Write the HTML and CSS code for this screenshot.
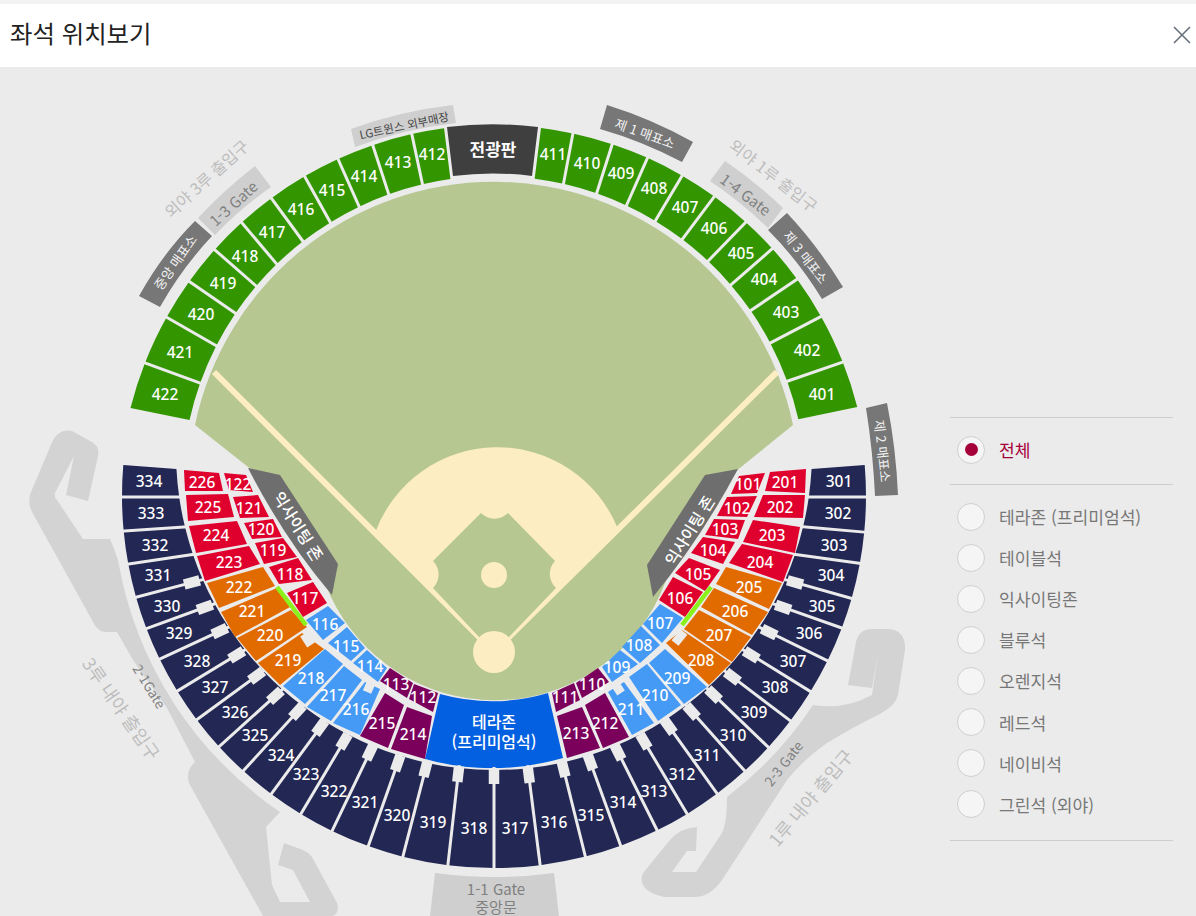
FILE: index.html
```html
<!DOCTYPE html>
<html lang="ko">
<head>
<meta charset="utf-8">
<title>좌석 위치보기</title>
<link rel="stylesheet" href="styles.css">
</head>
<body>
<header class="top">
  <h1 class="title">좌석 위치보기</h1>
  <button class="close" aria-label="닫기">
    <svg width="18" height="18" viewBox="0 0 18 18"><path d="M1 1L17 17M17 1L1 17" class="close-x"/></svg>
  </button>
</header>
<main class="stage">
  <svg class="map" id="map" width="940" height="849" viewBox="0 67 940 849">
    <!-- gate walkways -->
    <path class="walk" d="M88 501L66 495L74 456L55 493Q54 497 57 500L83 539L110 539Q114 548 118 560A383 383 0 0 0 280 812L266 827L272 885L280 902L310 902L293 870L278 865L284 843L303 850Q308 852 312 857L337 903Q340 912 333 916L263 916L190 785Q184 772 195 762L167 708L133 660L117 632L104 632Q96 630 92 620L32 512Q27 502 31 492L53 440Q60 428 72 431L92 442Q100 447 98 456Z"/>
    <path class="walk" d="M878 653L872 688L848 685L856 642Q859 629 872 629L888 629Q906 630 905 650L898 695Q896 705 880 714Q855 726 827 743Q805 758 787 780L722 880Q710 897 695 897L664 897Q636 890 643 873L670 840Q680 828 697 827L696 851L687 851L672 872L696 872L722 833Q727 822 727 797A381 381 0 0 0 813 705Q845 710 872 695Z"/>
    <!-- field -->
    <path class="grass" d="M195 425A305.4 305.4 0 0 1 793 425L700 500L660 595A182 182 0 0 1 330 595L290 500Z"/>
    <path class="clay" d="M375 533A130 130 0 0 1 618 529L494 652Z"/>
    <path class="foul" d="M214 372L494 652L777 372"/>
    <path class="grass" d="M481 513A19 19 0 0 0 508 513L555 561A19 19 0 0 0 556 588L509 637L479 637L433 588A19 19 0 0 0 433 561Z"/>
    <circle class="clay" cx="494" cy="575" r="13"/>
    <circle class="clay" cx="494" cy="652" r="21"/>
    <!-- exciting zones -->
    <path class="zone" d="M248 468L280 475L338 564L332 595Q285 540 248 468Z"/>
    <path class="zone" d="M738 469L705 475L647 565L653 597Q700 540 738 469Z"/>
    <text class="zone-t" transform="translate(299 526) rotate(58)">익사이팅 존</text>
    <text class="zone-t" transform="translate(689 530) rotate(-58)">익사이팅 존</text>
    <!-- signs -->
    <path class="sign-l" d="M351 129Q400 111 453 105L456 123Q404 129 355 147Z"/>
    <text class="t-dark" transform="translate(404 125) rotate(-12)">LG트윈스 외부매장</text>
    <path class="sign-l" d="M255 166L271 187Q241 208 215 235L198 218Q224 190 255 166Z"/>
    <text class="t-gate" transform="translate(233 203) rotate(-42)">1-3 Gate</text>
    <path class="sign-d" d="M195 221L212 236Q182 268 160 307L139 296Q163 253 195 221Z"/>
    <text class="t-sign" transform="translate(175 262) rotate(-55)">중앙 매표소</text>
    <text class="t-out" transform="translate(206 178) rotate(-42)">외야 3루 출입구</text>
    <path class="sign-d" d="M607 105Q652 119 693 142L682 162Q642 141 600 129Z"/>
    <text class="t-sign" transform="translate(645 133) rotate(20)">제 1 매표소</text>
    <path class="sign-l" d="M725 161Q756 182 783 208L768 228Q741 202 710 181Z"/>
    <text class="t-gate" transform="translate(746 194) rotate(37)">1-4 Gate</text>
    <path class="sign-d" d="M787 213Q818 246 843 287L822 299Q798 260 768 230Z"/>
    <text class="t-sign" transform="translate(806 257) rotate(52)">제 3 매표소</text>
    <text class="t-out" transform="translate(774 175) rotate(38)">외야 1루 출입구</text>
    <path class="sign-d" d="M887 403Q896 448 898 495L875 496Q873 452 866 408Z"/>
    <text class="t-sign" transform="translate(883 451) rotate(84)">제 2 매표소</text>
    <path class="sign-l" d="M435 873Q495 881 554 873L559 916L430 916Z"/>
    <text class="t-gate" x="496" y="888">1-1 Gate<tspan x="496" dy="18">중앙문</tspan></text>
    <text class="t-out big" transform="translate(122 708) rotate(55)">3루 내야 출입구</text>
    <text class="t-gate small" transform="translate(150 686) rotate(58)">2-1Gate</text>
    <text class="t-gate small" transform="translate(783 763) rotate(-52)">2-3 Gate</text>
    <text class="t-out big" transform="translate(810 797) rotate(-50)">1루 내야 출입구</text>
    <!-- fixed seating blocks -->
    <path class="board" d="M447 127A375 375 0 0 1 538 127L532 176A312 312 0 0 0 453 176Z"/>
    <text class="board-t" x="493" y="148">전광판</text>
    <path class="terra" d="M440 694Q494 709 548 693L563 758Q494 778 425 759Z"/>
    <text class="terra-t" x="494" y="721">테라존<tspan x="494" dy="20">(프리미엄석)</tspan></text>
    <g id="seats"></g>
    <path class="lime" d="M277 587L306 625"/>
    <path class="lime" d="M711 587L682 625"/>
  </svg>
  <aside class="legend">
    <div class="legend-group first">
      <label class="row on"><span class="radio"></span>전체</label>
    </div>
    <div class="legend-group">
      <label class="row"><span class="radio"></span>테라존 (프리미엄석)</label>
      <label class="row"><span class="radio"></span>테이블석</label>
      <label class="row"><span class="radio"></span>익사이팅존</label>
      <label class="row"><span class="radio"></span>블루석</label>
      <label class="row"><span class="radio"></span>오렌지석</label>
      <label class="row"><span class="radio"></span>레드석</label>
      <label class="row"><span class="radio"></span>네이비석</label>
      <label class="row"><span class="radio"></span>그린석 (외야)</label>
    </div>
  </aside>
</main>
<script src="seats.js"></script>
</body>
</html>
```
FILE: styles.css
```css
* { box-sizing: border-box; }
html, body { margin: 0; padding: 0; height: 100%; overflow: hidden; }
body {
  background: #ebebeb;
  font-family: "Noto Sans CJK KR", "Noto Sans", sans-serif;
  width: 1196px;
  height: 916px;
}
.top {
  height: 67px;
  border-top: 4px solid #f2f2f2;
  background: #fff;
  display: flex;
  align-items: center;
  justify-content: space-between;
  padding: 0 5px 0 10px;
}
.title { margin: 0; font-size: 24.4px; font-weight: 400; color: #222; line-height: 1; position: relative; top: -2px; }
.close { border: 0; background: none; padding: 0; width: 18px; height: 18px; position: relative; top: -1px; }
.close svg { display: block; }
.close-x { stroke: #66707a; stroke-width: 1.6; fill: none; }
.stage { display: flex; height: 849px; }
.map { display: block; flex: none; }
.legend { margin-left: 10px; padding-top: 350px; width: 223px; }
.legend-group { border-top: 1px solid #cdcdcd; padding: 11px 0 15px 7px; display: grid; grid-auto-rows: 41.1px; }
.legend-group.first { padding-bottom: 14px; }
.legend-group:last-child { border-bottom: 1px solid #cdcdcd; }
.row { display: flex; align-items: center; gap: 14px; font-size: 17.1px; color: #777; line-height: 1; }
.row.on { color: #a6003a; }
.radio { width: 28px; height: 28px; border-radius: 50%; border: 1px solid #cfcfcf; background: #f5f5f5; flex: none; display: flex; align-items: center; justify-content: center; }
.row.on .radio::after { content: ""; width: 13px; height: 13px; border-radius: 50%; background: #a6003a; }

.walk { fill: #d3d3d3; }
.grass { fill: #b6c791; }
.clay { fill: #fdedc2; }
.foul { fill: none; stroke: #fdedc2; stroke-width: 6; }
.zone { fill: #6e6e6e; }
.sign-l { fill: #cfcfcf; }
.sign-d { fill: #777; }
.board { fill: #3f3f3f; }
.terra { fill: #0360e0; }
.lime { stroke: #8af21a; stroke-width: 4.5; fill: none; }
text { text-anchor: middle; dominant-baseline: central; font-family: "Noto Sans CJK KR", "Noto Sans", sans-serif; }
.zone-t { fill: #fff; font-size: 16px; font-weight: 500; }
.t-dark { fill: #444; font-size: 11.5px; }
.t-gate { fill: #808080; font-size: 15px; }
.t-gate.small { font-size: 13.5px; }
.t-sign { fill: #f2f2f2; font-size: 13px; }
.t-out { fill: #bdbdbd; font-size: 16px; }
.t-out.big { font-size: 18px; }
.board-t { fill: #fff; font-size: 17px; font-weight: 700; }
.terra-t { fill: #fff; font-size: 16px; font-weight: 500; }
.seat { font-family: "Noto Sans", "Noto Sans CJK KR", sans-serif; font-size: 15.5px; font-weight: 500; fill: #fff; }
.gap { stroke: #ebebeb; stroke-width: 3; }
.notch { stroke: #ebebeb; stroke-width: 10.5; }
.notch.sm { stroke-width: 9; }
.navy { fill: #222754; }
.green { fill: #339600; }
.red { fill: #e0002d; }
.orange { fill: #e26b00; }
.blue { fill: #459af5; }
.purple { fill: #7a005c; }
```
FILE: seats.js
```js
var NS = 'http://www.w3.org/2000/svg';
var root = document.getElementById('seats');

function add(tag, attrs, text) {
  var el = document.createElementNS(NS, tag);
  for (var k in attrs) el.setAttribute(k, attrs[k]);
  if (text) el.textContent = text;
  root.appendChild(el);
  return el;
}

// point where the line a->b meets a circle, the one nearest to b
function hit(a, b, c) {
  var dx = b[0] - a[0], dy = b[1] - a[1], len = Math.hypot(dx, dy);
  dx /= len; dy /= len;
  var fx = b[0] - c[0], fy = b[1] - c[1];
  var B = fx * dx + fy * dy, C = fx * fx + fy * fy - c[2] * c[2];
  var D = Math.sqrt(Math.max(0, B * B - C));
  var t1 = -B - D, t2 = -B + D;
  var t = Math.abs(t1) < Math.abs(t2) ? t1 : t2;
  return [b[0] + dx * t, b[1] + dy * t];
}

function ring(cls, list, outer, inner, sweep) {
  var pts = list.map(function (b) {
    var o = [b[0], b[1]], i = [b[2], b[3]];
    return { o: hit(i, o, outer), i: hit(o, i, inner), notch: b[4] ? i : null };
  });
  for (var n = 0; n + 1 < pts.length; n++) {
    var a = pts[n], b = pts[n + 1];
    add('path', {
      'class': cls,
      d: 'M' + a.o + 'A' + outer[2] + ' ' + outer[2] + ' 0 0 ' + sweep + ' ' + b.o +
         'L' + b.i + 'A' + inner[2] + ' ' + inner[2] + ' 0 0 ' + (1 - sweep) + ' ' + a.i + 'Z'
    });
  }
  pts.forEach(function (p, n) {
    if (n === 0 || n === pts.length - 1) return;
    var dx = p.i[0] - p.o[0], dy = p.i[1] - p.o[1], len = Math.hypot(dx, dy);
    dx /= len; dy /= len;
    add('line', { 'class': 'gap', x1: p.o[0] - dx * 3, y1: p.o[1] - dy * 3, x2: p.i[0] + dx * 3, y2: p.i[1] + dy * 3 });
    if (p.notch) {
      add('line', { 'class': 'notch', x1: p.notch[0] - dx * 6, y1: p.notch[1] - dy * 6, x2: p.notch[0] + dx * 10, y2: p.notch[1] + dy * 10 });
    }
  });
}

var NAVY_O = [494, 496, 372], NAVY_I = [494, 452, 318];
ring('navy', [
  [123,465,177,469],[122,497,177,497],[124,531,183,527],[129,564,189,555],
  [137,597,190,583,1],[148,628,203,608,1],[162,658,218,632,1],[179,690,235,656,1],
  [199,718,255,677,1],[221,745,274,697,1],[245,769,296,713,1],[272,793,319,729,1],
  [302,812,343,743,1],[333,829,369,754,1],[369,844,397,765,1],[403,856,425,771,1],
  [448,864,458,776,1],[494,868,494,778,1],[540,864,529,777,1],[585,855,564,771,1],
  [620,844,591,764,1],[656,828,619,754,1],[686,812,645,743,1],[716,792,670,728,1],
  [743,769,693,713,1],[767,746,715,696,1],[788,719,734,678,1],[808,690,753,656,1],
  [826,660,771,633,1],[839,627,785,608,1],[850,598,797,583,1],[858,563,800,555],
  [863,532,806,527],[866,497,810,497],[864,465,812,469]
], NAVY_O, NAVY_I, 0);

var G_O = [494, 500, 375], G_I = [494, 488, 312];
ring('green', [
  [131,408,190,420],[145,363,200,383],[168,318,215,345],[190,282,235,313],
  [215,250,255,285],[242,223,275,262],[272,199,302,240],[305,177,329,220],
  [338,159,358,204],[373,146,388,192],[412,135,422,182],[444,128,450,176]
], G_O, G_I, 1);
ring('green', [
  [541,128,535,176],[573,133,564,181],[612,145,598,189],[647,159,628,202],
  [682,176,657,218],[714,197,684,237],[745,223,711,258],[772,249,733,283],
  [796,280,753,309],[820,317,772,342],[843,362,788,381],[857,407,800,419]
], G_O, G_I, 1);

var quads = {
  red: [
    [184,470,219,473,223,491,185,491],[186,495,228,494,234,517,188,521],
    [189,526,237,521,247,544,196,553],[197,556,249,546,260,564,205,581],
    [224,473,246,475,253,492,229,490],[233,497,258,495,269,517,240,518],
    [244,523,273,519,282,537,252,539],[255,543,283,538,297,557,264,564],
    [269,567,298,558,312,580,279,584],[287,593,313,582,327,603,303,617],
    [739,476,765,473,757,493,731,494],[770,472,806,469,805,493,765,491],
    [727,497,757,496,747,517,717,516],[763,495,805,495,803,518,754,517],
    [714,519,745,520,738,539,705,535],[753,520,800,527,795,553,743,542],
    [703,537,735,542,723,564,691,553],[742,544,793,555,783,582,729,563],
    [689,558,720,570,705,591,675,573],[673,577,703,592,685,617,659,600]
  ],
  orange: [
    [207,583,263,567,275,586,219,608],[221,612,277,588,290,607,235,637],
    [237,638,291,610,307,627,256,661],[258,663,302,633,324,649,280,685],
    [726,567,782,583,769,609,716,584],[714,588,768,612,752,635,701,607],
    [699,610,751,637,732,662,684,629],[682,630,731,663,709,685,666,643]
  ],
  blue: [
    [283,686,325,649,343,664,305,704],[307,707,344,666,362,680,331,721],
    [333,723,365,682,380,689,360,735],[306,620,328,606,345,623,323,640],
    [328,643,347,627,365,648,351,661],[353,663,367,650,387,668,378,682],
    [608,692,624,682,654,723,632,735],[629,677,647,664,681,705,658,721],
    [649,663,665,649,707,687,684,704],[602,667,620,650,638,664,612,682],
    [622,647,641,626,660,645,640,663],[660,604,683,618,662,643,643,624]
  ],
  purple: [
    [360,736,385,693,404,705,388,748],[391,749,407,707,432,716,425,759],
    [380,681,390,668,413,683,407,698],[409,699,414,684,438,693,433,712],
    [552,693,574,683,580,700,556,712],[576,683,598,668,609,682,582,698],
    [557,716,582,707,600,748,567,758],[585,705,605,693,629,737,603,748]
  ]
};
Object.keys(quads).forEach(function (cls) {
  quads[cls].forEach(function (q) {
    add('polygon', { 'class': cls, points: q.join(' ') });
  });
});

[[304,634,311,645],[684,632,675,643],[371,683,367,692],[614,682,621,693]].forEach(function (l) {
  add('line', { 'class': 'notch sm', x1: l[0], y1: l[1], x2: l[2], y2: l[3] });
});

var labels = {
  334:[149,481],333:[151,513],332:[155,545],331:[158,575],330:[167,606],329:[179,633],328:[197,661],
  327:[215,687],326:[235,712],325:[255,735],324:[281,755],323:[306,774],322:[334,791],321:[365,802],
  320:[397,815],319:[433,822],318:[474,828],317:[515,828],316:[554,822],315:[591,815],314:[623,802],
  313:[654,791],312:[682,774],311:[707,755],310:[733,735],309:[754,712],308:[775,687],307:[793,661],
  306:[809,633],305:[822,606],304:[831,575],303:[834,545],302:[838,513],301:[839,481],
  226:[202,482],225:[208,507],224:[216,535],223:[229,562],222:[239,587],221:[252,611],220:[270,635],
  219:[288,660],218:[311,678],217:[333,695],216:[356,709],215:[382,723],214:[413,734],213:[576,733],
  212:[605,723],211:[631,709],210:[655,695],209:[677,678],208:[701,660],207:[719,635],206:[735,611],
  205:[749,587],204:[760,562],203:[772,535],202:[780,507],201:[785,482],
  122:[238,484],121:[249,508],120:[261,529],119:[273,550],118:[290,574],117:[305,598],116:[325,624],
  115:[346,646],114:[370,666],113:[396,684],112:[423,697],111:[565,697],110:[592,684],109:[617,667],
  108:[639,645],107:[660,623],106:[680,598],105:[698,574],104:[713,550],103:[725,529],102:[737,508],101:[748,484],
  422:[165,394],421:[180,352],420:[201,314],419:[223,283],418:[245,256],417:[272,232],416:[301,209],
  415:[332,190],414:[364,176],413:[398,162],412:[432,154],411:[553,154],410:[587,163],409:[621,173],
  408:[654,188],407:[685,207],406:[714,228],405:[741,253],404:[764,279],403:[786,312],402:[807,350],401:[822,394]
};
Object.keys(labels).forEach(function (k) {
  add('text', { 'class': 'seat', x: labels[k][0], y: labels[k][1] }, k);
});
```
